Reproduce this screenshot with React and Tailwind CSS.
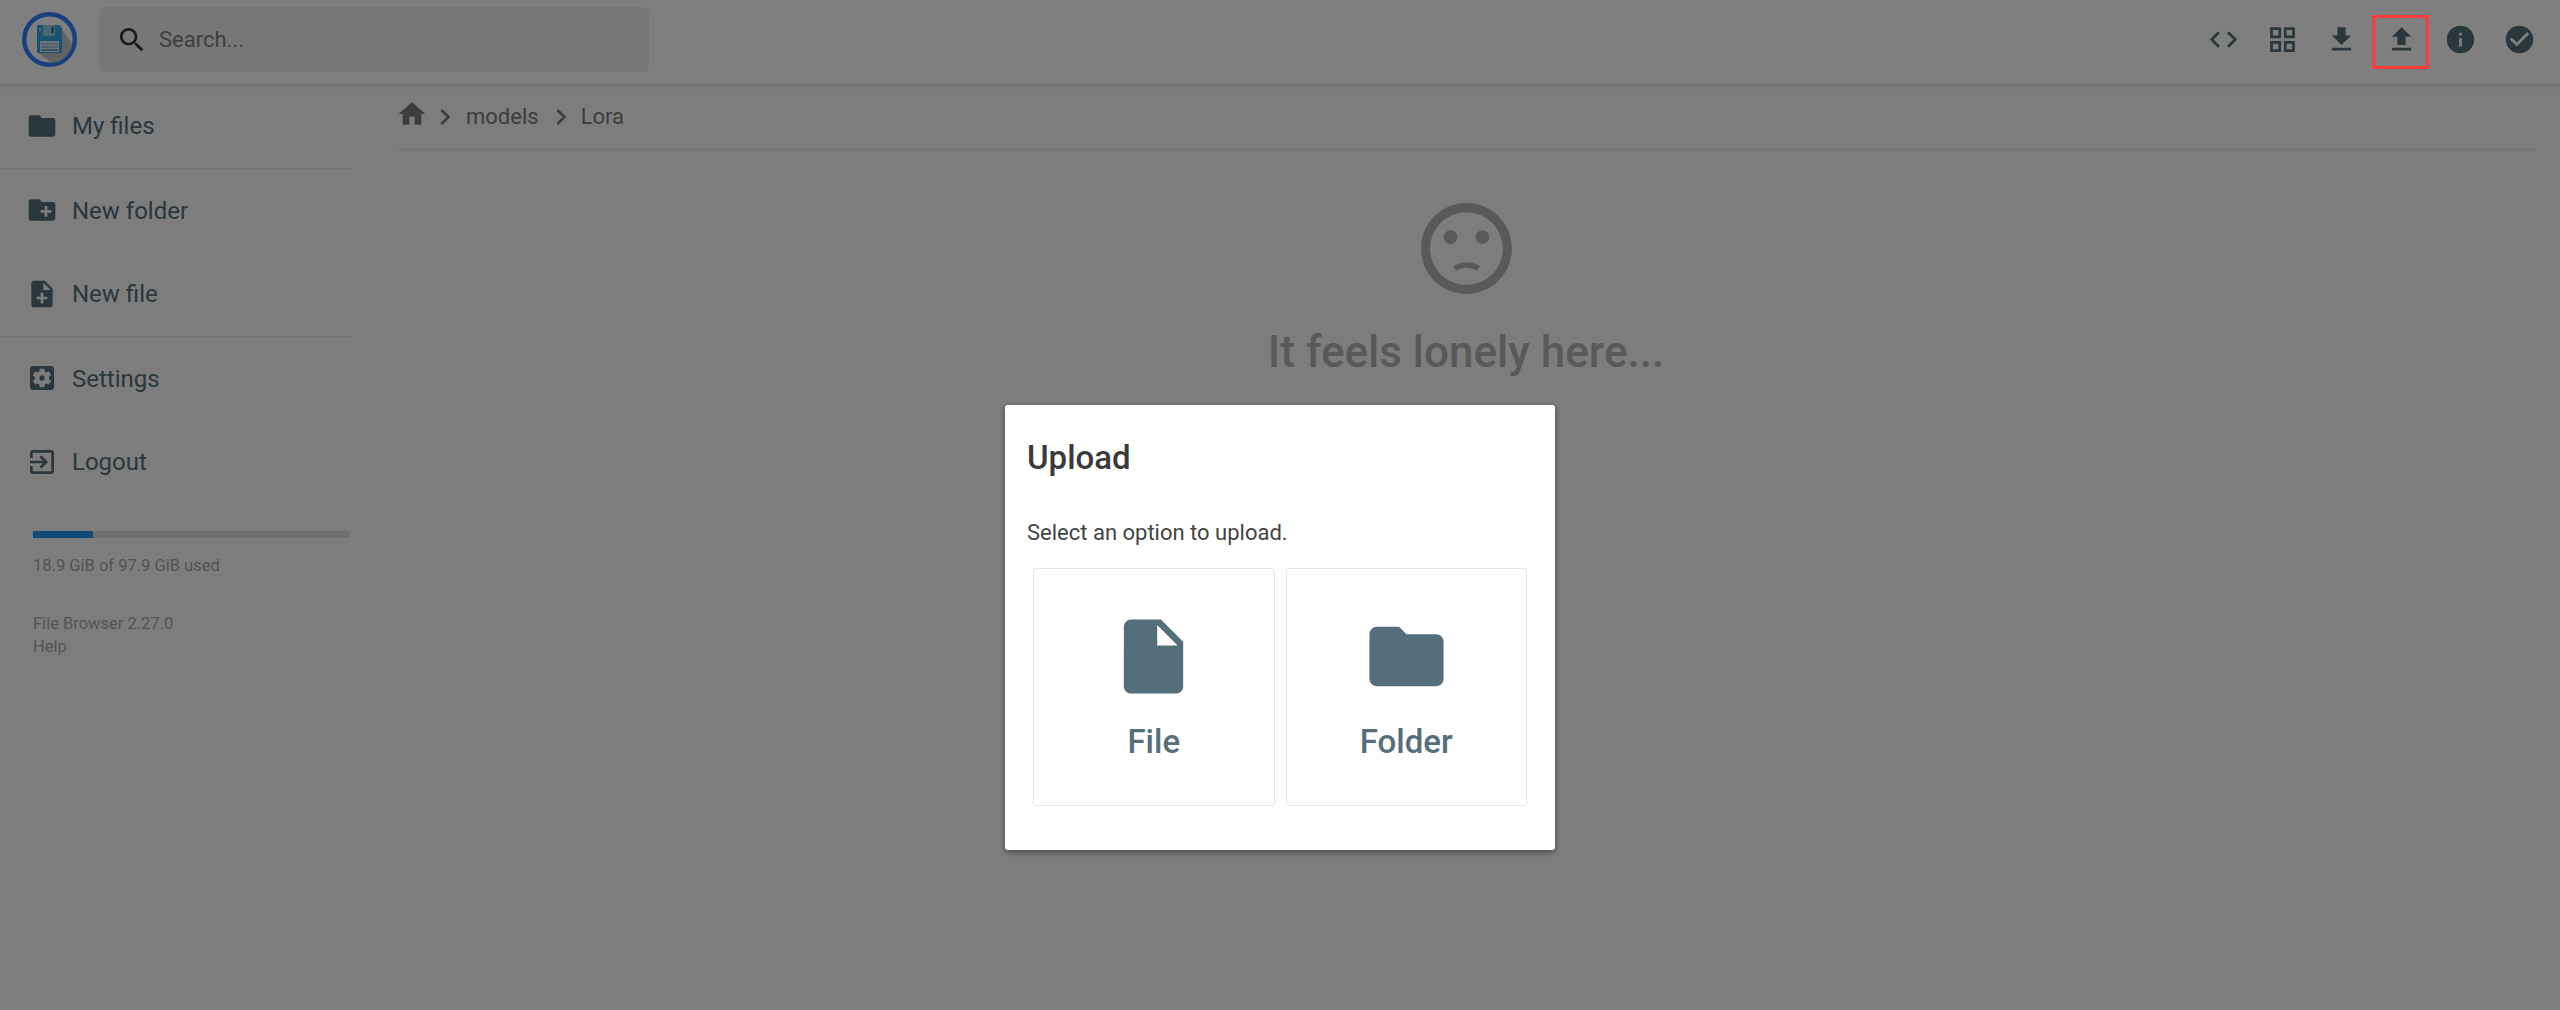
const paths = {
  folder: 'M10 4H4c-1.1 0-1.99.9-1.99 2L2 18c0 1.1.9 2 2 2h16c1.1 0 2-.9 2-2V8c0-1.1-.9-2-2-2h-8l-2-2z',
  newFolder: 'M20 6h-8l-2-2H4c-1.11 0-1.99.89-1.99 2L2 18c0 1.11.89 2 2 2h16c1.11 0 2-.89 2-2V8c0-1.11-.89-2-2-2zm-1 8h-3v3h-2v-3h-3v-2h3V9h2v3h3v2z',
  newFile: 'M14 2H6c-1.1 0-1.99.9-1.99 2L4 20c0 1.1.89 2 1.99 2H18c1.1 0 2-.9 2-2V8l-6-6zm2 14h-3v3h-2v-3H8v-2h3v-3h2v3h3v2zm-3-7V3.5L18.5 9H13z',
  settings: 'M12 10c-1.1 0-2 .9-2 2s.9 2 2 2 2-.9 2-2-.9-2-2-2zm7-7H5c-1.11 0-2 .9-2 2v14c0 1.1.89 2 2 2h14c1.11 0 2-.9 2-2V5c0-1.1-.89-2-2-2zm-1.75 9c0 .23-.02.46-.05.68l1.48 1.16c.13.11.17.3.08.45l-1.4 2.42c-.09.15-.27.21-.43.15l-1.74-.7c-.36.28-.76.51-1.18.69l-.26 1.85c-.03.17-.18.3-.35.3h-2.8c-.17 0-.32-.13-.35-.29l-.26-1.85c-.43-.18-.82-.41-1.18-.69l-1.74.7c-.16.06-.34 0-.43-.15l-1.4-2.42c-.09-.15-.05-.34.08-.45l1.48-1.16c-.03-.23-.05-.46-.05-.69 0-.23.02-.46.05-.68l-1.48-1.16c-.13-.11-.17-.3-.08-.45l1.4-2.42c.09-.15.27-.21.43-.15l1.74.7c.36-.28.76-.51 1.18-.69l.26-1.85c.03-.17.18-.3.35-.3h2.8c.17 0 .32.13.35.29l.26 1.85c.43.18.82.41 1.18.69l1.74-.7c.16-.06.34 0 .43.15l1.4 2.42c.09.15.05.34-.08.45l-1.48 1.16c.03.23.05.46.05.69z',
  logout: 'M10.09 15.59L11.5 17l5-5-5-5-1.41 1.41L12.67 11H3v2h9.67l-2.58 2.59zM19 3H5c-1.11 0-2 .9-2 2v4h2V5h14v14H5v-4H3v4c0 1.1.89 2 2 2h14c1.1 0 2-.9 2-2V5c0-1.1-.9-2-2-2z',
  search: 'M15.5 14h-.79l-.28-.27C15.41 12.59 16 11.11 16 9.5 16 5.91 13.09 3 9.5 3S3 5.91 3 9.5 5.91 16 9.5 16c1.61 0 3.09-.59 4.23-1.57l.27.28v.79l5 4.99L20.49 19l-4.99-5zm-6 0C7.01 14 5 11.99 5 9.5S7.01 5 9.5 5 14 7.01 14 9.5 11.99 14 9.5 14z',
  code: 'M9.4 16.6L4.8 12l4.6-4.6L8 6l-6 6 6 6 1.4-1.4zm5.2 0l4.6-4.6-4.6-4.6L16 6l6 6-6 6-1.4-1.4z',
  grid: 'M3 3v8h8V3H3zm6 6H5V5h4v4zm-6 4v8h8v-8H3zm6 6H5v-4h4v4zm4-16v8h8V3h-8zm6 6h-4V5h4v4zm-6 4v8h8v-8h-8zm6 6h-4v-4h4v4z',
  download: 'M19 9h-4V3H9v6H5l7 7 7-7zM5 18v2h14v-2H5z',
  upload: 'M9 16h6v-6h4l-7-7-7 7h4v6zm-4 2h14v2H5v-2z',
  info: 'M12 2C6.48 2 2 6.48 2 12s4.48 10 10 10 10-4.48 10-10S17.52 2 12 2zm1 15h-2v-6h2v6zm0-8h-2V7h2v2z',
  check: 'M12 2C6.48 2 2 6.48 2 12s4.48 10 10 10 10-4.48 10-10S17.52 2 12 2zm-2 15l-5-5 1.41-1.41L10 14.17l7.59-7.59L19 8l-9 9z',
  home: 'M10 20v-6h4v6h5v-8h3L12 3 2 12h3v8z',
  chevron: 'M10 6L8.59 7.41 13.17 12l-4.58 4.59L10 18l6-6z',
  file: 'M6 2c-1.1 0-1.99.9-1.99 2L4 20c0 1.1.89 2 1.99 2H18c1.1 0 2-.9 2-2V8l-6-6H6zm7 7V3.5L18.5 9H13z',
};

function Icon({ d, className }) {
  return (
    <svg viewBox="0 0 24 24" fill="currentColor" className={className}>
      <path d={d} />
    </svg>
  );
}

function Logo() {
  return (
    <svg viewBox="0 0 55 55" className="w-[55px] h-[55px] shrink-0">
      <circle cx="27.5" cy="27.5" r="25.3" fill="#ffffff" stroke="#3080ff" strokeWidth="4.4" />
      <path d="M38 14 L50 32 A22 22 0 0 1 30 51 L16 41 Z" fill="#c4c4c4" />
      <path d="M15 14 A1 1 0 0 1 16 13 H37 L40 16 V40 A1 1 0 0 1 39 41 H16 A1 1 0 0 1 15 40 Z" fill="#35a5e0" />
      <rect x="21" y="13" width="12" height="11" fill="#9ccbe4" />
      <rect x="29.5" y="15" width="2" height="6" fill="#1f5f88" />
      <rect x="18" y="29" width="19" height="11" fill="#d8eaf2" />
      <rect x="19" y="31.5" width="17" height="1" fill="#6aa0bc" />
      <rect x="19" y="34.5" width="17" height="1" fill="#6aa0bc" />
      <rect x="19" y="37.5" width="17" height="1" fill="#1f5f88" />
      <rect x="17" y="16.5" width="2" height="2" fill="#d8eaf2" />
    </svg>
  );
}

function SideItem({ d, label }) {
  return (
    <div className="flex items-center h-[83.5px] pl-[26px] text-[#546e7a]">
      <Icon d={d} className="w-8 h-8 shrink-0" />
      <span className="ml-[14px] mt-[1px] text-[24px]">{label}</span>
    </div>
  );
}

function OptionCard({ d, label }) {
  return (
    <div className="w-[241.5px] h-[238px] flex flex-col items-center border border-[#e6e6e6] rounded-[3px] text-[#546e7a]">
      <Icon d={d} className="w-[89px] h-[89px] mt-[43px]" />
      <span className="mt-[21px] text-[33px] font-medium leading-[40px] text-[#546e7a]">{label}</span>
    </div>
  );
}

const topIcons = ['code', 'grid', 'download', 'upload', 'info', 'check'];

export default function App() {
  return (
    <div className="relative w-[2560px] h-[1010px] overflow-hidden bg-[#fafafa] font-['Roboto',sans-serif]">
      <header className="flex items-center justify-between h-[84px] bg-white shadow-[0_0_7px_rgba(0,0,0,0.2)] pl-[22px] pr-[11px] pb-[5px]">
        <div className="flex items-center">
          <Logo />
          <div className="flex items-center w-[550px] h-[65px] ml-[22px] rounded-[6px] bg-[#eeeeee] text-[#7f7f7f]">
            <Icon d={paths.search} className="w-8 h-8 ml-[17px] text-[#333]" />
            <span className="ml-[11px] text-[22px]">Search...</span>
          </div>
        </div>
        <div className="flex items-center">
          {topIcons.map((name) => (
            <button key={name} className="w-[59.2px] flex justify-center text-[#546e7a]">
              <Icon d={paths[name]} className="w-[33px] h-[33px]" />
            </button>
          ))}
        </div>
      </header>

      <div className="flex">
        <aside className="w-[352px] shrink-0">
          <SideItem d={paths.folder} label="My files" />
          <div className="h-px bg-[#eaeaea]" />
          <SideItem d={paths.newFolder} label="New folder" />
          <SideItem d={paths.newFile} label="New file" />
          <div className="h-px bg-[#eaeaea]" />
          <SideItem d={paths.settings} label="Settings" />
          <SideItem d={paths.logout} label="Logout" />
          <div className="ml-[33px] mt-[27px] w-[317px] h-[7px] bg-[#dedede]">
            <div className="w-[60px] h-full bg-[#2196f3]" />
          </div>
          <p className="ml-[33px] mt-[16px] text-[16.5px] leading-[23px] text-[#a8a8a8]">18.9 GiB of 97.9 GiB used</p>
          <p className="ml-[33px] mt-[35px] text-[16.5px] leading-[23px] text-[#a8a8a8]">File Browser 2.27.0</p>
          <p className="ml-[33px] text-[16.5px] leading-[23px] text-[#a8a8a8]">Help</p>
        </aside>

        <main className="w-[2140px] ml-[44px]">
          <nav className="flex items-center h-[66px] border-b border-[#e6e6e6] text-[#7c7c7c] text-[22px]">
            <Icon d={paths.home} className="w-8 h-8 text-[#7c7c7c] mb-[6px]" />
            <Icon d={paths.chevron} className="w-8 h-8 ml-[1px]" />
            <span className="ml-[5px]">models</span>
            <Icon d={paths.chevron} className="w-8 h-8 ml-[6px]" />
            <span className="ml-[4px]">Lora</span>
          </nav>
          <div className="flex flex-col items-center text-[#b2b2b2]">
            <svg viewBox="0 0 24 24" fill="currentColor" className="w-[109px] h-[109px] mt-[44px]">
              <circle cx="15.5" cy="9.5" r="1.5" />
              <circle cx="8.5" cy="9.5" r="1.5" />
              <path d="M11.99 2C6.47 2 2 6.48 2 12s4.47 10 9.99 10C17.52 22 22 17.52 22 12S17.52 2 11.99 2zM12 20c-4.42 0-8-3.58-8-8s3.58-8 8-8 8 3.58 8 8-3.58 8-8 8z" />
              <path d="M9.05 15.9Q12 14.2 14.95 15.9L14.3 16.9Q12 15.6 9.7 16.9Z" />
            </svg>
            <h2 className="mt-[20px] text-[44px] leading-[58px] font-medium">It feels lonely here...</h2>
          </div>
        </main>
      </div>

      <div className="absolute inset-0 bg-black/50 flex justify-center pt-[405px]">
        <div className="w-[550px] h-[445px] bg-white rounded-[3px] shadow-[0_2px_6px_rgba(0,0,0,0.45)]">
          <h2 className="mt-[33px] ml-[22px] text-[33px] leading-[40px] font-medium text-[#3a3a3a]">Upload</h2>
          <p className="mt-[40px] ml-[22px] text-[22px] leading-[30px] text-[#444]">Select an option to upload.</p>
          <div className="flex gap-[11px] ml-[28px] mt-[20px]">
            <OptionCard d={paths.file} label="File" />
            <OptionCard d={paths.folder} label="Folder" />
          </div>
        </div>
        <div className="absolute left-[2372px] top-[15px] w-[57px] h-[54px] border-[3px] border-[#ff3b3b]" />
      </div>
    </div>
  );
}
